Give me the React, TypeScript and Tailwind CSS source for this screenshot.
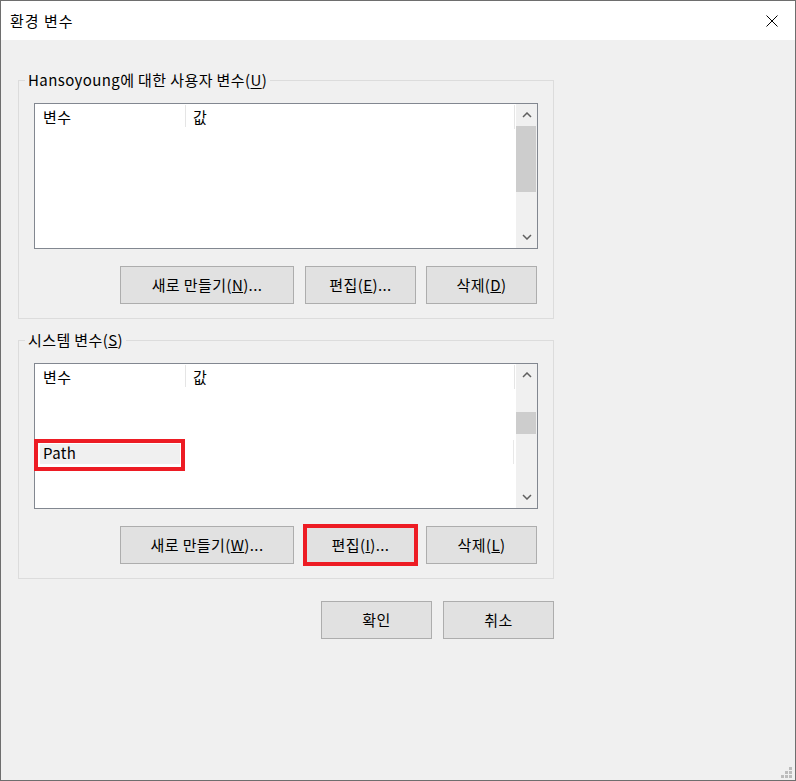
import React from 'react';

const font = "font-['Noto_Sans_CJK_KR','Noto_Sans',sans-serif]";

function Chevron({ down }: { down?: boolean }) {
    return (
        <svg width="10" height="6" viewBox="0 0 10 6">
            <polyline
                points={down ? '1,1 5,5 9,1' : '1,5 5,1 9,5'}
                fill="none"
                stroke="#606060"
                strokeWidth="1.5"
            />
        </svg>
    );
}

function ScrollBar({ gap, thumb }: { gap: string; thumb: string }) {
    return (
        <div className="w-[21px] h-full bg-[#f0f0f0] flex flex-col">
            <div className="h-[22px] flex items-center justify-center">
                <Chevron />
            </div>
            <div className="flex-1">
                <div className={`${gap} ${thumb} bg-[#cdcdcd] mr-[1px]`} />
            </div>
            <div className="h-[22px] flex items-center justify-center">
                <Chevron down />
            </div>
        </div>
    );
}

function VarList({ system }: { system?: boolean }) {
    return (
        <div className="w-[504px] h-[146px] border border-[#828790] bg-white flex">
            <div className="flex-1 flex flex-col">
                <div className="flex h-[26px] items-start pt-[1px]">
                    <div className="w-[150px] pl-[8px] leading-[24px]">변수</div>
                    <div className="w-px h-[22px] bg-[#e5e5e5]" />
                    <div className="flex-1 pl-[7px] leading-[24px]">값</div>
                    <div className="w-px h-[24px] bg-[#e5e5e5] mr-[1px]" />
                </div>
                {system && (
                    <div className="flex items-start">
                        <div className="mt-[49px] -ml-[1px] w-[151px] h-[32px] border-4 border-[#ed1c24]">
                            <div className="ml-[2px] mt-[1px] w-[140px] h-[20px] bg-[#f0f0f0] pl-[3px] leading-[18px]">
                                Path
                            </div>
                        </div>
                        <div className="flex-1" />
                        <div className="mt-[50px] w-px h-[24px] bg-[#e8e8e8] mr-[2px]" />
                    </div>
                )}
            </div>
            {system ? (
                <ScrollBar gap="mt-[26px]" thumb="h-[22px]" />
            ) : (
                <ScrollBar gap="mt-0" thumb="h-[66px]" />
            )}
        </div>
    );
}

function Btn({
    children,
    w,
    marked,
}: {
    children: React.ReactNode;
    w: string;
    marked?: boolean;
}) {
    return (
        <div
            className={`${w} h-[38px] bg-[#e1e1e1] border border-[#adadad] flex items-center justify-center ${
                marked ? 'outline-4 outline-[#ed1c24] -outline-offset-2' : ''
            }`}
        >
            {children}
        </div>
    );
}

function Group({
    title,
    system,
    btns,
}: {
    title: React.ReactNode;
    system?: boolean;
    btns: React.ReactNode[];
}) {
    return (
        <fieldset className="w-[536px] border border-[#dcdcdc] px-[15px] pt-[13px] pb-[14px]">
            <legend className="-ml-[9px] px-[3px] leading-[20px]">{title}</legend>
            <VarList system={system} />
            <div className="flex mt-[17px] ml-[86px]">
                <Btn w="w-[174px]">{btns[0]}</Btn>
                <div className="ml-[11px]">
                    <Btn w="w-[111px]" marked={system}>
                        {btns[1]}
                    </Btn>
                </div>
                <div className="ml-[10px]">
                    <Btn w="w-[111px]">{btns[2]}</Btn>
                </div>
            </div>
        </fieldset>
    );
}

export default function App() {
    return (
        <div
            className={`w-[796px] h-[781px] border border-[#6e6e6e] bg-[#f0f0f0] flex flex-col text-[15px] tracking-[0.4px] text-black ${font}`}
        >
            <div className="h-[39px] bg-white flex items-center pl-[9px] pr-[17px]">
                <span className="flex-1 leading-[20px] tracking-[1px]">환경 변수</span>
                <svg width="12" height="12" viewBox="0 0 12 12">
                    <path d="M0.5 0.5 L11.5 11.5 M11.5 0.5 L0.5 11.5" stroke="#000" strokeWidth="1" />
                </svg>
            </div>

            <div className="flex-1 flex flex-col pl-[17px] pt-[30px]">
                <Group
                    title={
                        <>
                            Hansoyoung에 대한 사용자 변수(<u className="underline-offset-2">U</u>)
                        </>
                    }
                    btns={[
                        <>새로 만들기(<u>N</u>)...</>,
                        <>편집(<u>E</u>)...</>,
                        <>삭제(<u>D</u>)</>,
                    ]}
                />
                <div className="mt-[11px]">
                    <Group
                        system
                        title={
                            <>
                                시스템 변수(<u>S</u>)
                            </>
                        }
                        btns={[
                            <>새로 만들기(<u>W</u>)...</>,
                            <>편집(<u>I</u>)...</>,
                            <>삭제(<u>L</u>)</>,
                        ]}
                    />
                </div>
                <div className="w-[536px] flex justify-end gap-[11px] mt-[22px]">
                    <Btn w="w-[111px]">확인</Btn>
                    <Btn w="w-[111px]">취소</Btn>
                </div>

                <div className="mt-auto self-end mr-[3px] mb-[2px]">
                    <svg width="11" height="11" viewBox="0 0 11 11">
                        <rect x="8" y="0" width="3" height="3" fill="#bcbcbc" />
                        <rect x="4" y="4" width="3" height="3" fill="#bcbcbc" />
                        <rect x="8" y="4" width="3" height="3" fill="#bcbcbc" />
                        <rect x="0" y="8" width="3" height="3" fill="#bcbcbc" />
                        <rect x="4" y="8" width="3" height="3" fill="#bcbcbc" />
                        <rect x="8" y="8" width="3" height="3" fill="#bcbcbc" />
                    </svg>
                </div>
            </div>
        </div>
    );
}
